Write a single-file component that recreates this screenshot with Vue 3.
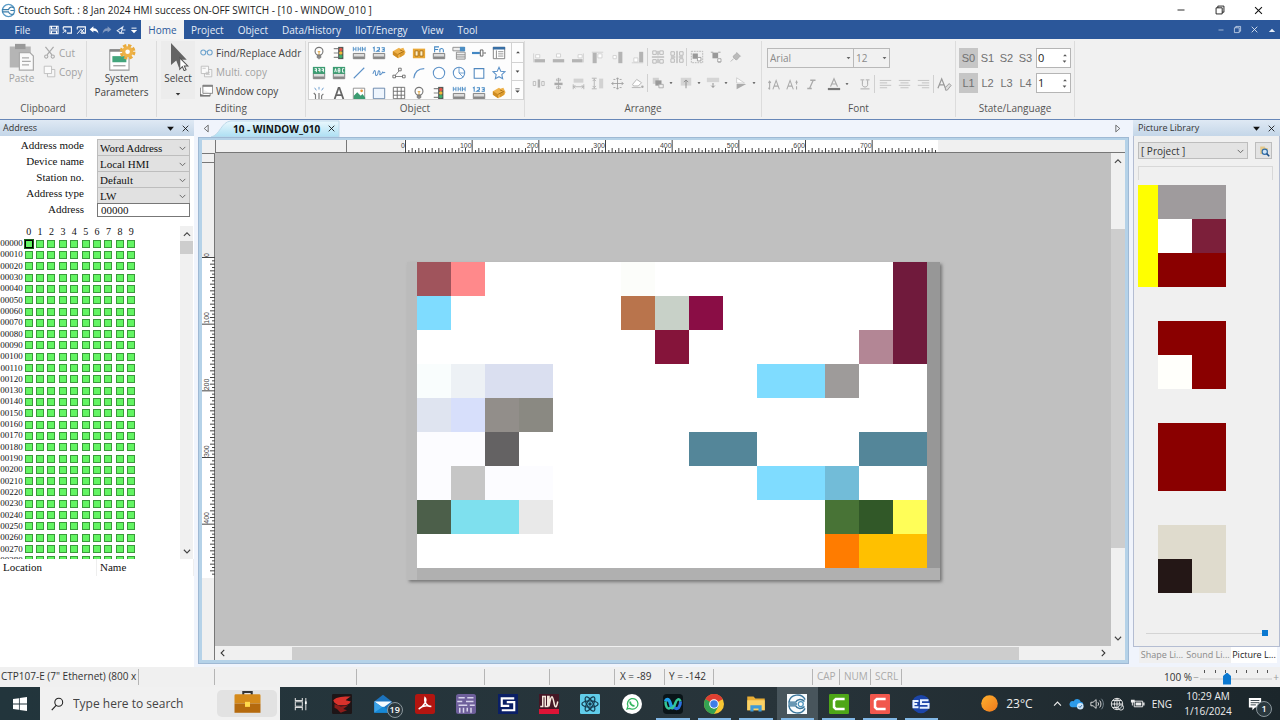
<script setup>
import { h } from 'vue'

const bulb = '<circle cx="8" cy="6" r="4.5" fill="#fff" stroke="#777" stroke-width="1.3"/><path d="M6.5 6.5h3M8 6.5v4" stroke="#d99a2b" fill="none"/><path d="M6 10.5h4v3H6zM7 14.5h2" fill="#888" stroke="#777"/>'
const lamp = '<path d="M2 3h5M2 8h5M2 13h5" stroke="#888" stroke-width="1.2"/><rect x="7" y="1" width="6" height="14" fill="#4f5b57"/><circle cx="10" cy="4" r="2" fill="#e2574c"/><circle cx="10" cy="8" r="2" fill="#f0b93a"/><circle cx="10" cy="12" r="2" fill="#3fae6b"/>'
const pad = '<path d="M1.500 8.500h13v6h-13z" fill="#ddd" stroke="#777"/><path d="M2 12h12v2.500H2z" fill="#888"/>'
const hand = '<path d="M1 6l7-4 1.500 1L13 2l2.500 5L14 10l-7 4-6-4z" fill="#efb24a"/><path d="M1 6l6 3.500V14l-6-4z" fill="#cf8c22"/><path d="M9 8.500l5-3V10l-5 3z" fill="#db9a2e"/><path d="M7 9.500L13.500 6M9 4.500l3 1" stroke="#a56d12" fill="none"/>'
const g = '#b4b4b4'
const doc = (c) => `<path d="M5.500 5.500h9v9h-9z" fill="#f6f6f6" stroke="${c}"/><path d="M1.500 1.500h9v9h-9z" fill="#fafafa" stroke="${c}"/>`
const lines = (a, b) => `<path d="M1 3h14M${a} 6h${b}M1 9h14M${a} 12h${b}" stroke="#b9b9b9" fill="none"/>`
const icons = {
  ctouch: '<circle cx="8" cy="8" r="6.500" fill="#fff" stroke="#5b9cc7" stroke-width="1.500"/><path d="M1 7h7c1-3 4-3 6-2M1 9.500h7c1 3 4 3 6 2M14 8h-4" fill="none" stroke="#3d7da8" stroke-width="1.300"/>',
  save: '<path d="M1.500 2h13v12h-13zM4 2v4.500h8V2M4 14V9.500h8V14" fill="none" stroke="#fff" stroke-width="1.700"/>',
  win: '<path d="M2 3h13v10H8M2 3v4" fill="none" stroke="#fff" stroke-width="1.700"/><path d="M1 13l5-5m0 4V8H2" fill="none" stroke="#fff" stroke-width="1.500"/>',
  winx: '<path d="M2 3h13v10H8M2 3v4" fill="none" stroke="#fff" stroke-width="1.700"/><path d="M2 14l6-7M7 13l6-7m-6 0l6 7" fill="none" stroke="#fff" stroke-width="1.500"/>',
  undo: '<path d="M1 7l6-5v3c5 0 8 3 8 9-2-4-4-5-8-5v3z" fill="#fff"/>',
  redo: '<path d="M15 7L9 2v3c-5 0-8 3-8 9 2-4 4-5 8-5v3z" fill="#8299bf"/>',
  pencil: '<path d="M2 9l9-6-3 10zM9 8h6M5 13h8" fill="none" stroke="#dce5f3" stroke-width="1.700"/>',
  more: '<path d="M4 5h8" stroke="#fff" stroke-width="1.500"/><path d="M3 8h10l-5 5z" fill="#fff"/>',
  min: '<path d="M4 8h8" stroke="currentColor"/>',
  restore: '<path d="M3.500 5.500h7v7h-7zM5.500 5.500v-2h7v7h-2" fill="none" stroke="currentColor"/>',
  close: '<path d="M3 3l10 10m0-10L3 13" stroke="currentColor" stroke-width="1.500"/>',
  up: '<path d="M3 11l5-5 5 5z" fill="currentColor"/>',
  down: '<path d="M2 5h12l-6 7z" fill="currentColor"/>',
  downbar: '<path d="M3 4h10" stroke="currentColor" stroke-width="1.500"/><path d="M3 8h10l-5 5z" fill="currentColor"/>',
  chevd: '<path d="M3 6l5 5 5-5" fill="none" stroke="currentColor" stroke-width="1.700"/>',
  chevu: '<path d="M3 11l5-5 5 5" fill="none" stroke="currentColor" stroke-width="1.700"/>',
  chevl: '<path d="M10 3L5 8l5 5" fill="none" stroke="currentColor" stroke-width="1.700"/>',
  chevr: '<path d="M6 3l5 5-5 5" fill="none" stroke="currentColor" stroke-width="1.700"/>',
  tril: '<path d="M11 2v12L4 8z" fill="none" stroke="#444" stroke-width="1.300"/>',
  trir: '<path d="M5 2v12l7-6z" fill="none" stroke="#444" stroke-width="1.300"/>',
  paste: '<path d="M1 2h12v12H1z" fill="#b5b5b5"/><path d="M4 .5h6v3H4z" fill="#999"/><path d="M6.500 5.500h6l2 2v8h-8z" fill="#fafafa" stroke="#aaa" stroke-width=".7"/><path d="M8 8.500h4M8 10.500h5M8 12.500h4" stroke="#aaa" stroke-width=".7"/>',
  cut: '<path d="M3 1l8 10M13 1L5 11" stroke="#aaa" stroke-width="1.500"/><circle cx="4" cy="13" r="2" fill="none" stroke="#aaa" stroke-width="1.300"/><circle cx="12" cy="13" r="2" fill="none" stroke="#aaa" stroke-width="1.300"/>',
  copy: doc('#b8b8b8'),
  multi: doc('#b8b8b8') + '<path d="M7 9h5M7 11.500h5M3 4h4" stroke="#bbb"/>',
  system: '<path d="M1 4h11v11.500H1z" fill="#fff" stroke="#999" stroke-width=".6"/><path d="M1 3.500h11v1.500H1z" fill="#888"/><path d="M2.500 7.500h8v3.500h-8z" fill="#43a57c"/><path d="M3 13h7" stroke="#999" stroke-width=".7"/><g transform="translate(11.200 5)"><circle r="3.600" fill="none" stroke="#e9ab3c" stroke-width="1.800" stroke-dasharray="1.800 1"/><circle r="3.200" fill="#eeb248"/><circle r="1.300" fill="#fff"/></g>',
  cursor: '<path d="M4 0v12.500l3-2.500 1.500 4 2-1-1.500-3.500h4z" fill="#646464"/><path d="M9 8.500v6.500l1.500-1.500 1 2.300 1.100-.5-1-2.200h2z" fill="#fff" stroke="#555" stroke-width=".6"/>',
  find: '<circle cx="4" cy="8" r="3" fill="none" stroke="#6ea3cd" stroke-width="1.300"/><circle cx="12" cy="8" r="3" fill="none" stroke="#6ea3cd" stroke-width="1.300"/><path d="M7 7h2" stroke="#6ea3cd"/>',
  wcopy: '<path d="M3.500 1.500h12v10h-12zM.5 4.500v10h12v-3" fill="#fff" stroke="#777"/><path d="M3.500 2.500h12M.5 13v1.500h12" stroke="#777" stroke-width="1.800"/>',
  bulb, lamp, hand,
  hhh: pad + '<path d="M1.500 1v5m0-2.500h3M4.500 1v5M7 1v5m0-2.500h3M10 1v5M12 1v5m0-2.500h3M15 1v5" stroke="#4388c4"/>',
  n123: pad + '<path d="M1 2.500l1.500-1v5M5.500 2h3v2L5.500 6h3.500M11 2h3v4h-3m1-2h2" fill="none" stroke="#4388c4" stroke-width="1.200"/>',
  switch: '<path d="M1 3h14v11H1z" fill="#e8a735"/><path d="M3.500 5.500h3.500v6H3.500zM9 5.500h3.500v6H9z" fill="#fff0c7" stroke="#a66a10"/>',
  fn: pad + '<path d="M3 7V1h5M3 4h4M9 7V3m0 1c2-2 4-1 4 1v2" fill="none" stroke="#4388c4" stroke-width="1.200"/>',
  combo: '<path d="M1 1.500h13v4H1zM5 7h10v8H5z" fill="#eee" stroke="#888"/><path d="M9 1h6v5H9z" fill="#4e8fc4"/><path d="M5 10h10M5 12.500h10" stroke="#888"/>',
  slide: '<path d="M0 8h9" stroke="#4388c4" stroke-width="2.500"/><path d="M9.500 4.500h3v7h-3zM13 8h3" fill="#fff" stroke="#555"/>',
  table: '<path d="M1.500 1.500h13v13h-13zM5 5v9" fill="#fff" stroke="#777"/><path d="M1 1h14v3H1z" fill="#386fa5"/><path d="M7 6.500h6M7 9h6M7 11.500h6" stroke="#888"/>',
  g999: pad + '<path d="M1 1h14v8H1z" fill="#3c9c72"/><path d="M3 3h2v2H3m2-2v4M7 3h2v2H7m2-2v4M11 3h2v2h-2m2-2v4" fill="none" stroke="#fff"/>',
  gabc: pad + '<path d="M1 1h14v8H1z" fill="#3c9c72"/><path d="M3 7l1-4 1 4M7 3v4h2V3zm0 2h2m5-2h-2v4h2" fill="none" stroke="#fff"/>',
  line: '<path d="M2 14L14 2" stroke="#5d92c8" stroke-width="1.300"/>',
  wave: '<path d="M1 9c2-6 3-4 3 0s3 1 3-2 3-1 2 2 3-1 3-2 1 2 3 0" fill="none" stroke="#5d92c8" stroke-width="1.200"/>',
  nodes: '<path d="M2.500 12L9 4.500m4 7.500H4" stroke="#777"/><path d="M1 10.500h3v3H1zM7.500 2.500h3v3h-3zM12 10.500h3v3h-3z" fill="#fff" stroke="#666"/>',
  arc: '<path d="M2 14C3 7 7 3 14 3" fill="none" stroke="#5d92c8" stroke-width="1.300"/>',
  circle: '<circle cx="8" cy="8" r="6.500" fill="#fff" stroke="#5d92c8" stroke-width="1.200"/>',
  pie: '<circle cx="8" cy="8" r="6.500" fill="#fff" stroke="#5d92c8" stroke-width="1.200"/><path d="M8 1.500V8h6.500M8 8l4.500 4.500" fill="none" stroke="#5d92c8"/>',
  rect: '<path d="M2.500 3h11v11h-11z" fill="#fff" stroke="#4f87be" stroke-width="1.200"/>',
  star: '<path d="M8 1.500l2 4.500 4.800.5-3.600 3.300 1 4.800L8 12.200l-4.200 2.400 1-4.800L1.200 6.500 6 6z" fill="#fff" stroke="#5d92c8" stroke-width="1.200"/>',
  burst: '<path d="M8 1v3M3 2l2 3m8-3l-2 3" stroke="#5d92c8"/><path d="M2 8l2 2v5M8 8v7m5-6l-2 2v4" fill="none" stroke="#777" stroke-width="1.300"/>',
  bigA: '<path d="M3 15L7.500 2h1L13 15M4.500 10.500h7" fill="none" stroke="#666" stroke-width="2"/>',
  image: '<path d="M1.500 2.500h13v13h-13z" fill="#fff" stroke="#888"/><path d="M2 15v-4l4-4 4 4 2-2 3 4v2z" fill="#3c9c72"/><circle cx="11" cy="5.500" r="1.500" fill="#e9943a"/>',
  frame: '<path d="M1.500 2.500h13v12h-13z" fill="#eef5fd" stroke="#5f7fa6"/>',
  grid: '<path d="M1.500 1.500h13v13h-13zM1.500 6h13m-13 4.500h13M6 1.500v13m4.500-13v13" fill="#fff" stroke="#666"/>',
  al1: `<path d="M3 10h13v4H3z" fill="${g}"/><path d="M4.500 4.500h5v4h-5z" fill="#fff" stroke="#ccc"/><path d="M2 3v11" stroke="#ccc"/>`,
  al2: `<path d="M1 10h14v4H1z" fill="${g}"/><path d="M5.500 3.500h5v4h-5z" fill="#fff" stroke="#ccc"/>`,
  al3: `<path d="M0 10h13v4H0z" fill="${g}"/><path d="M7.500 4.500h5v4h-5z" fill="#fff" stroke="#ccc"/><path d="M14 3v11" stroke="#ccc"/>`,
  al4: `<path d="M2 2h5v13H2z" fill="${g}"/><path d="M8.500 3.500h5v5h-5z" fill="#fff" stroke="#ccc"/><path d="M1 1.500h14" stroke="#ccc"/>`,
  al5: `<path d="M9 1h5v14H9z" fill="${g}"/><path d="M2.500 5.500h4v4h-4z" fill="#fff" stroke="#ccc"/>`,
  al6: `<path d="M10 1h5v13h-5z" fill="${g}"/><path d="M3.500 8.500h5v5h-5z" fill="#fff" stroke="#ccc"/><path d="M1 14.500h14" stroke="#ccc"/>`,
  ar1: `<path d="M2 1h4v4H2zM10 1h4v4h-4zM2 11h4v4H2zM10 11h4v4h-4z" fill="none" stroke="${g}"/><path d="M1 8h14M8 1v5m0 4v5" stroke="#999"/>`,
  ar2: `<path d="M1 2h4v4H1zM11 2h4v4h-4zM1 10h4v4H1zM11 10h4v4h-4z" fill="none" stroke="${g}"/><path d="M8 1v14M1 8h5m4 0h5" stroke="#999"/>`,
  gr1: `<path d="M1.500 1.500h13v13h-13z" fill="none" stroke="${g}" stroke-dasharray="2 1"/><path d="M3 4h6v6H3z" fill="#999"/><path d="M8.500 8.500h4v4h-4z" fill="#fff" stroke="#999"/>`,
  gr2: '<path d="M3 2h7v7H3z" fill="#999"/><path d="M9.500 9.500h4v4h-4zM1 1.500h3m6 0h3m-3 12h3" fill="#fff" stroke="#999"/>',
  pin: '<path d="M9 2l5 5-2 1-2 3-2 1-4-4 1-2 3-2zM5 10l-4 4" fill="#bbb" stroke="#aaa"/>',
  d1: `<path d="M1.500 5.500h3v5h-3zM12 5.500h3v5h-3z" fill="none" stroke="${g}"/><path d="M7 3h3v10H7z" fill="${g}"/>`,
  d2: `<path d="M5.500 2.500h5v2h-5zM5.500 12h5v2h-5z" fill="none" stroke="${g}"/><path d="M3 7h10v3H3z" fill="#aaa"/><path d="M8 1v14" stroke="#aaa"/>`,
  d3: '<path d="M2 2h12v5H2z" fill="#d2d2d2"/><path d="M2 12h12M1.500 9v6m13-6v6M4 10l-2 2 2 2m8-4l2 2-2 2" fill="none" stroke="#aaa"/>',
  d4: '<path d="M10 2h5v12h-5z" fill="#d2d2d2"/><path d="M4 2v12M1 1.500h6m-6 13h6M2 5l2-2 2 2m-4 6l2 2 2-2" fill="none" stroke="#aaa"/>',
  d5: '<path d="M8 1v14M1 8h14M6 3l2-2 2 2m-4 10l2 2 2-2M3 6L1 8l2 2m10-4l2 2-2 2M3 3h2m6 0h2M3 13h2m6 0h2" fill="none" stroke="#999"/>',
  d6: '<path d="M2 9l5-6 6 4-4 4H3zM1 13h11" fill="#fff" stroke="#aaa"/><circle cx="14" cy="12" r="1.500" fill="#aaa"/>',
  o1: '<path d="M2 2h7v7H2z" fill="#d0d0d0"/><path d="M5 5h7v6H5z" fill="#999"/><path d="M9 9.500h5v4H9z" fill="#eee" stroke="#aaa"/>',
  o2: '<path d="M2 2h12v9H2z" fill="#d5d5d5"/><path d="M8 14V5M5.500 7L8 4.500 10.500 7" fill="none" stroke="#888"/>',
  o3: '<path d="M1 2h14v5H1z" fill="#d5d5d5"/><path d="M8 8v5m-2-2l2 2 2-2" fill="none" stroke="#888"/>',
  o4: '<path d="M3 8V2l9 6z" fill="#fff" stroke="#ccc"/><path d="M3 9h11l-11 6z" fill="#aaa"/>',
  fup: '<path d="M2 4v10M.5 6L2 4l1.500 2m-3 6L2 14M6 14l4-11 4 11M7.500 10h5" fill="none" stroke="#aaa" stroke-width="1.300"/>',
  fdn: '<path d="M1 14L5 3l4 11M2.500 10h5M13 4v4m0 2v4M12 6l1-2 1 2" fill="none" stroke="#aaa" stroke-width="1.300"/>',
  ital: '<path d="M7 3h7M3 14h6M11 3L6 14" fill="none" stroke="#aaa" stroke-width="1.700"/>',
  fcol: '<path d="M4 11l4-9 4 9M5.500 8h5" fill="none" stroke="#aaa" stroke-width="1.400"/><path d="M1 12.500h14V15H1z" fill="#777"/>',
  under: '<path d="M2 2.500h5m2 0h5M4.500 3v6c0 4 7 4 7 0V3M2 14.500h12" fill="none" stroke="#aaa" stroke-width="1.300"/>',
  left: lines(1, 9), center: lines(3, 10), right: lines(6, 9),
  brush: '<path d="M1 12L5 2l4 10M2.500 8.500h5" fill="none" stroke="#999" stroke-width="1.300"/><path d="M9 11l4-4 2 2-4 5H9z" fill="#ddd" stroke="#999"/>',
  search: '<circle cx="10" cy="6" r="4.500" fill="none" stroke="#222" stroke-width="1.200"/><path d="M7 9.500L2 15" stroke="#222" stroke-width="1.300"/>',
  lookup: '<path d="M3 2h6l1 2h3v8H3z" fill="#e5c98b"/><circle cx="9" cy="9" r="3.500" fill="#cfe4f7" stroke="#2f6ca8" stroke-width="1.500"/><path d="M11.500 11.500L15 15" stroke="#1c4f86" stroke-width="2"/>',
  start: '<path d="M0 2.300l6.800-1v6.200H0zM7.700 1.200L16 0v7.500H7.700zM0 8.500h6.800v6.200L0 13.700zM7.700 8.500H16V16l-8.300-1.200z" fill="#fff"/>',
  brief: '<path d="M5.500 3V1.200h5V3" fill="none" stroke="#333" stroke-width="1.200"/><path d="M1 2.500h14a.7.7 0 01.7.700V8H.3V3.200A.7.700 0 011 2.500z" fill="#d58a1a"/><path d="M.3 8h15.400v5.500H.3z" fill="#b56a0e"/><path d="M6.500 7h3v3h-3z" fill="#ffd94a"/>',
  task: '<path d="M1.500 1v3h8V1M1.500 15v-3h8v3M1.500 5.500h8v5h-8zM13.500 1v14" fill="none" stroke="#ddd" stroke-width="1.200"/><path d="M12.500 5h2v3h-2z" fill="#fff"/>',
  dragon: '<rect width="16" height="16" rx="1" fill="#1d1517"/><path d="M1 5c3-3 8-3 14-3-2 1-3 2-4 3l4 1c-1 2-3 3-5 3H5L2 7z" fill="#d8322c"/><path d="M2 8l5 2 6-1-4 3 3 1-5 2-3-3-2-1z" fill="#8c1c1a"/>',
  mail: '<path d="M1 6l7-5.500L15 6v9H1z" fill="#1c73bd"/><path d="M1 6h14l-7 5z" fill="#f4faff"/><path d="M1 6l7 5-7 4z" fill="#3ba3e8"/><path d="M1 15h14l-7-5z" fill="#1689d6"/>',
  pdf: '<rect width="16" height="16" rx="2" fill="#b31510"/><path d="M8 3c2 2-1 7-5 9 3-3 7-3 10-2-3 0-6-3-5-7z" fill="none" stroke="#fff" stroke-width="1.200"/>',
  code: '<rect width="16" height="16" rx="2" fill="#6e5f9b"/><path d="M2 3h5m2 0h5M1 6h4m3 0h6M2 9h7m2 0h4M3 11v4m3-4v4m3-4v3m3-3v4" stroke="#d8d4ec" stroke-width="1.200"/>',
  sblue: '<rect width="16" height="16" fill="#0a1f66"/><path d="M13 3.500H3v6h6M7 6.500h6v6.500H3" fill="none" stroke="#fff" stroke-width="1.700"/>',
  scope: '<rect width="16" height="16" fill="#451725"/><path d="M0 12h16v4H0z" fill="#dd1436"/><path d="M1 10h2V2h2v8h2V2h1v8c2-12 3-8 4-3s2 4 3-1" fill="none" stroke="#f5e9dc" stroke-width="1.200"/>',
  react: '<rect width="16" height="16" rx="1" fill="#61cdea"/><g fill="none" stroke="#163d50"><ellipse cx="8" cy="8" rx="6.500" ry="2.500"/><ellipse cx="8" cy="8" rx="6.500" ry="2.500" transform="rotate(60 8 8)"/><ellipse cx="8" cy="8" rx="6.500" ry="2.500" transform="rotate(120 8 8)"/></g><circle cx="8" cy="8" r="1.400" fill="#163d50"/>',
  phone: '<circle cx="8" cy="8" r="8" fill="#fff"/><path d="M4 12l.8-2.300A4.200 4.200 0 118 12c-.8 0-1.400-.2-2-.5z" fill="none" stroke="#32b55f"/><path d="M6.500 6c0 2 1.500 3.500 3.500 3.500" fill="none" stroke="#32b55f" stroke-width="1.500"/>',
  webex: '<rect width="16" height="16" rx="3" fill="#0a1418"/><path d="M2 6c1-3 3-2 4 2s2 4 3 1" fill="none" stroke="#1f9de8" stroke-width="2.600"/><path d="M6 11c-3 2-4-2-4-5M14 6c-1-3-3-2-4 1s-2 5-4 4" fill="none" stroke="#35c796" stroke-width="2"/><path d="M14 6c0 4-2 7-5 5" fill="none" stroke="#2a6fe0" stroke-width="2.400"/>',
  chrome: '<circle cx="8" cy="8" r="8" fill="#f7c633"/><path d="M8 8L1.100 4A8 8 0 0115 4z" fill="#de3f32"/><path d="M1.100 4A8 8 0 008 16l3.500-6L8 8z" fill="#34a252"/><path d="M1.100 4H15l-4 2-3 2z" fill="#de3f32"/><circle cx="8" cy="8" r="3.800" fill="#fff"/><circle cx="8" cy="8" r="3" fill="#3f7de8"/>',
  folder: '<path d="M1 2h5l1.500 1.500H15V13H1z" fill="#e9ad34"/><path d="M1 5h14v8H1z" fill="#fbd267"/><path d="M3.500 14v-5h9v5h-2.500v-2.500H6V14z" fill="#3f9ad6"/>',
  ct2: '<rect width="16" height="16" fill="#f8fbfd"/><path d="M14.500 4.500A7 7 0 001.500 6.500H7c1-2.500 5-3 7-.5M14.500 11.500A7 7 0 011.500 9.500H7c1 2.500 5 3 7 .5M1 8h7" fill="none" stroke="#39759b" stroke-width="1.100"/><circle cx="11" cy="8" r="2" fill="#fff" stroke="#4a92bb"/>',
  camg: '<rect width="16" height="16" rx="1" fill="#4ea617"/><path d="M12.500 4H5.500L4 5.500v5L5.500 12h7" fill="none" stroke="#fff" stroke-width="2"/>',
  camr: '<rect width="16" height="16" rx="1" fill="#f1574c"/><path d="M12.500 4H5.500L4 5.500v5L5.500 12h7" fill="none" stroke="#fff" stroke-width="2"/>',
  ess: '<circle cx="8" cy="8" r="7.300" fill="#1c45a8"/><path d="M6 5.500H2v5h4M2 8h3M14 5H8v3h6v3H7" fill="none" stroke="#e8f2ff" stroke-width="1.600"/>',
  sun: '<defs><linearGradient id="sunfill" x2="1" y2="1"><stop stop-color="#ffb12e"/><stop offset="1" stop-color="#f0791c"/></linearGradient></defs><circle cx="8" cy="8" r="7.800" fill="url(#sunfill)"/>',
  cloud: '<path d="M3 12h9a3 3 0 00.500-6A4 4 0 005 5.500 3.300 3.300 0 003 12z" fill="#2d9be9"/><circle cx="12" cy="11" r="3.500" fill="#cfe6f8"/><path d="M10.500 11l1.200 1.200 2-2.400" fill="none" stroke="#1d5e98"/>',
  sound: '<path d="M1 6h2.500L7 3v10L3.500 10H1zM9 6c1 1 1 3 0 4m2-6c2 2 2 6 0 8" fill="none" stroke="#ddd" stroke-width="1.100"/><path d="M13 2c3 3 3 9 0 12" fill="none" stroke="#84919a"/>',
  globe: '<circle cx="8" cy="8" r="6.500" fill="none" stroke="#eee"/><path d="M1.500 8h13M8 1.500v13M3 4h10M3 12h6M8 1.500c-4 4-4 9 0 13M8 1.500c3 3 3 5 3 7" fill="none" stroke="#eee"/><circle cx="12.500" cy="12" r="3" fill="#202e34" stroke="#eee"/><path d="M10.500 14l4-4" stroke="#eee"/>',
  batt: '<path d="M4.500 5.500h9v6h-9z" fill="none" stroke="#eee"/><path d="M6 7h6v3H6zM14 7h1.500v3H14zM1 4h4v3H3v3H2V7H1z" fill="#eee"/>',
  note: '<path d="M1 1h14v11H8l-3 3v-3H1z" fill="#fff"/><path d="M3 4h10M3 6.500h10M3 9h6" stroke="#26343b"/>',
}
const Ico = (p) => h('svg', { viewBox: '0 0 16 16', width: p.s, height: p.s, 'aria-hidden': 'true', innerHTML: icons[p.n] })
Ico.props = ['n', 's']

const menus = ['Project', 'Object', 'Data/History', 'IIoT/Energy', 'View', 'Tool']
const quick = ['save', 'win', 'winx', 'undo', 'redo', 'pencil', 'more']
const gallery = ['bulb', 'lamp', 'hhh', 'n123', 'hand', 'switch', 'fn', 'combo', 'slide', 'table',
  'g999', 'gabc', 'line', 'wave', 'nodes', 'arc', 'circle', 'pie', 'rect', 'star',
  'burst', 'bigA', 'image', 'frame', 'grid', 'bulb', 'lamp', 'hhh', 'n123', 'hand']
const states = [['S0', 'S1', 'S2', 'S3'], ['L1', 'L2', 'L3', 'L4']]
const fields = [['Address mode', 'Word Address'], ['Device name', 'Local HMI'], ['Station no.', 'Default'], ['Address type', 'LW']]
const rows = Array.from({ length: 29 }, (_, i) => String(i * 10).padStart(5, '0'))

const palette = {
  a: '#a0545c', b: '#ff898b', c: '#7fdcff', d: '#fcfdfa', e: '#701a3c', f: '#b9744c', g: '#c8d1c8', h: '#8a0d45',
  i: '#85143a', j: '#b38695', k: '#f9fdfd', l: '#edf1f5', m: '#dadff0', n: '#9e9b9a', o: '#dfe4f0', p: '#d7dffb',
  q: '#928e8a', r: '#8a8982', s: '#fcfcff', t: '#646263', u: '#548699', v: '#c6c6c6', w: '#72bcd8', x: '#4c5f4a',
  y: '#7ee0ee', z: '#e9e9e9', A: '#487336', B: '#315828', C: '#fffe58', D: '#ff7c00', E: '#ffc000',
  F: '#9f9b9d', G: '#ffffff', H: '#7c1f3a', I: '#8a0000', J: '#fffffb', K: '#dfdbcd', L: '#241716', '.': '#ffffff',
}
const mosaic = [
  'ab....d.......e', 'c.....fgh.....e', '.......i.....je', 'klmm......ccn..', 'opqr...........',
  'sst.....uu...uu', 'svss......ccw..', 'xyyz........ABC', '............DEE',
].join('').split('')
const pictures = [['FF', 'GH', 'II'], ['II', 'JI'], ['II', 'II'], ['KK', 'LK']]

const ticks = (n) => Array.from({ length: n }, (_, i) => ({ p: (i * 10) / 3, big: i % 20 === 0, mid: i % 2 === 0, v: i * 5 }))
const hTicks = ticks(160)
const vTicks = ticks(96)

const apps = ['task', 'dragon', 'mail', 'pdf', 'code', 'sblue', 'scope', 'react', 'phone', 'webex', 'chrome', 'folder', 'ct2', 'camg', 'camr', 'ess']
const running = ['webex', 'chrome', 'folder', 'ct2', 'camg', 'camr', 'ess']
</script>

<template>
  <div class="app">
    <header class="title">
      <Ico n="ctouch" s="15" />
      <h1>Ctouch Soft. : 8 Jan 2024 HMI success ON-OFF SWITCH - [10 - WINDOW_010 ]</h1>
      <div class="wbtns">
        <button aria-label="Minimize"><Ico n="min" s="14" /></button>
        <button aria-label="Restore"><Ico n="restore" s="14" /></button>
        <button aria-label="Close"><Ico n="close" s="11" /></button>
      </div>
    </header>

    <nav class="menu">
      <button class="file">File</button>
      <div class="quick"><button v-for="q in quick" :key="q" :aria-label="q"><Ico :n="q" s="10" /></button></div>
      <button class="active">Home</button>
      <button v-for="m in menus" :key="m">{{ m }}</button>
      <div class="mdi">
        <button aria-label="Minimize window"><Ico n="min" s="10" /></button>
        <button aria-label="Restore window"><Ico n="restore" s="11" /></button>
        <button aria-label="Close window"><Ico n="close" s="9" /></button>
        <button aria-label="Collapse ribbon"><Ico n="up" s="10" /></button>
      </div>
    </nav>

    <div class="ribbon">
      <section class="grp clip">
        <div class="body">
          <button class="big dim"><Ico n="paste" s="28" /><span>Paste</span></button>
          <div class="stack dim">
            <button><Ico n="cut" s="13" />Cut</button>
            <button><Ico n="copy" s="13" />Copy</button>
          </div>
        </div>
        <h2>Clipboard</h2>
      </section>
      <section class="grp sys">
        <button class="big"><Ico n="system" s="28" /><span>System<br>Parameters</span></button>
      </section>
      <section class="grp edit">
        <div class="body">
          <button class="big select"><Ico n="cursor" s="28" /><span>Select</span><Ico n="down" s="6" /></button>
          <div class="stack">
            <button><Ico n="find" s="13" />Find/Replace Addr</button>
            <button class="dim"><Ico n="multi" s="13" />Multi. copy</button>
            <button><Ico n="wcopy" s="13" />Window copy</button>
          </div>
        </div>
        <h2>Editing</h2>
      </section>
      <section class="grp obj">
        <div class="gallery">
          <div class="tiles"><button v-for="(o, i) in gallery" :key="i" :aria-label="o"><Ico :n="o" s="14" /></button></div>
          <div class="gscroll">
            <button aria-label="Previous row"><Ico n="up" s="6" /></button>
            <button aria-label="Next row"><Ico n="down" s="5" /></button>
            <button aria-label="Expand gallery"><Ico n="downbar" s="7" /></button>
          </div>
        </div>
        <h2>Object</h2>
      </section>
      <section class="grp arr">
        <div class="tools">
          <div class="set six"><button v-for="i in 6" :key="i" :aria-label="'Align ' + i"><Ico :n="'al' + i" s="13" /></button></div>
          <div class="set two"><button aria-label="Space down"><Ico n="ar1" s="14" /></button><button aria-label="Space across"><Ico n="ar2" s="14" /></button></div>
          <div class="set three"><button aria-label="Group"><Ico n="gr1" s="14" /></button><button aria-label="Ungroup"><Ico n="gr2" s="13" /></button><button aria-label="Pin"><Ico n="pin" s="12" /></button></div>
        </div>
        <div class="tools">
          <div class="set six"><button v-for="i in 6" :key="i" :aria-label="'Distribute ' + i"><Ico :n="'d' + i" s="13" /></button></div>
          <div class="set four"><button v-for="i in 4" :key="i" :aria-label="'Order ' + i"><Ico :n="'o' + i" s="14" /><Ico n="down" s="4" /></button></div>
        </div>
        <h2>Arrange</h2>
      </section>
      <section class="grp font">
        <div class="pair">
          <label class="pick face"><select aria-label="Font"><option>Arial</option></select><Ico n="down" s="5" /></label>
          <label class="pick size"><select aria-label="Font size"><option>12</option></select><Ico n="down" s="5" /></label>
        </div>
        <div class="tools">
          <div class="set five">
            <button aria-label="Larger"><Ico n="fup" s="13" /></button><button aria-label="Smaller"><Ico n="fdn" s="13" /></button>
            <button aria-label="Italic"><Ico n="ital" s="12" /></button>
            <button class="wide" aria-label="Color"><Ico n="fcol" s="14" /><Ico n="down" s="4" /></button>
            <button aria-label="Underline"><Ico n="under" s="12" /></button>
          </div>
          <div class="set aligns"><button v-for="a in ['left', 'center', 'right']" :key="a" :aria-label="a"><Ico :n="a" s="13" /></button></div>
          <div class="set one"><button aria-label="Format painter"><Ico n="brush" s="15" /></button></div>
        </div>
        <h2>Font</h2>
      </section>
      <section class="grp lang">
        <div v-for="(s, i) in states" :key="i" class="states">
          <button v-for="(b, j) in s" :key="b" :class="{ on: j === 0 }">{{ b }}</button>
          <div class="spin"><input :value="i" :aria-label="i ? 'Language' : 'State'"><span><Ico n="up" s="6" /><Ico n="down" s="5" /></span></div>
        </div>
        <h2>State/Language</h2>
      </section>
    </div>

    <main class="work">
      <aside class="address">
        <div class="phead"><h3>Address</h3><button aria-label="Panel menu"><Ico n="down" s="9" /></button><button aria-label="Close panel"><Ico n="close" s="9" /></button></div>
        <form class="form" @submit.prevent>
          <div v-for="(f, i) in fields" :key="f[0]" class="frow">
            <label :for="'f' + i">{{ f[0] }}</label>
            <div class="pick"><select :id="'f' + i"><option>{{ f[1] }}</option></select><Ico n="chevd" s="9" /></div>
          </div>
          <div class="frow"><label for="addr">Address</label><input id="addr" value="00000"></div>
        </form>
        <div class="mem">
          <table>
            <thead><tr><th></th><th v-for="n in 10" :key="n">{{ n - 1 }}</th></tr></thead>
            <tbody>
              <tr v-for="(r, i) in rows" :key="r"><th>{{ r }}</th><td v-for="n in 10" :key="n" :class="{ cur: i === 0 && n === 1 }"><i></i></td></tr>
            </tbody>
          </table>
          <div class="vbar"><Ico n="chevu" s="10" /><b></b><Ico n="chevd" s="10" /></div>
        </div>
        <div class="locs"><span>Location</span><span>Name</span></div>
      </aside>

      <section class="editor">
        <div class="tabs">
          <Ico n="tril" s="9" />
          <div class="tab"><svg class="tabbg" viewBox="0 0 130 18" preserveAspectRatio="none"><defs><linearGradient id="tabfill" x2="0" y2="1"><stop stop-color="#ebf8fd" /><stop offset="1" stop-color="#acdff3" /></linearGradient></defs><path d="M0 18C9 16 10 2 20 1H128V18Z" fill="url(#tabfill)" stroke="#bdd8e8" /></svg><button class="tname">10 - WINDOW_010</button><button aria-label="Close tab"><Ico n="close" s="9" /></button></div>
          <Ico class="last" n="trir" s="9" />
        </div>
        <div class="frame">
          <div class="corner"></div>
          <svg class="hr" height="13">
            <rect x="189" width="534" height="13" fill="#fff" />
            <path d="M.5 0V13M131.500 0V13M0 12.500H4000" stroke="#777" />
            <g transform="translate(190 0)">
              <template v-for="t in hTicks" :key="t.v">
                <path :d="`M${t.p + 0.5} ${t.big ? 0 : t.mid ? 8 : 10}V13`" stroke="#444" />
                <text v-if="t.big" :x="t.p" y="8" text-anchor="end">{{ t.v }}</text>
              </template>
            </g>
          </svg>
          <svg class="vr" width="13">
            <rect y="105" width="13" height="320" fill="#fff" />
            <path d="M0 .5H13M0 9.500H13M12.500 0V4000" stroke="#777" />
            <g transform="translate(0 104)">
              <template v-for="t in vTicks" :key="t.v">
                <path :d="`M${t.big ? 0 : t.mid ? 8 : 10} ${t.p + 0.5}H13`" stroke="#444" />
                <text v-if="t.big" :transform="`translate(7 ${t.p}) rotate(-90)`">{{ t.v }}</text>
              </template>
            </g>
          </svg>
          <div class="canvas">
            <div class="screen">
              <div class="mosaic"><i v-for="(c, i) in mosaic" :key="i" :style="{ background: palette[c] }"></i></div>
              <div class="edge"></div>
            </div>
          </div>
          <div class="vbar main"><Ico n="chevu" s="10" /><b></b><Ico n="chevd" s="10" /></div>
          <div class="hbar"><Ico n="chevl" s="10" /><b></b><Ico n="chevr" s="10" /></div>
        </div>
      </section>

      <aside class="library">
        <div class="phead"><h3>Picture Library</h3><button aria-label="Panel menu"><Ico n="down" s="9" /></button><button aria-label="Close panel"><Ico n="close" s="9" /></button></div>
        <div class="lbody">
          <div class="lpick">
            <div class="pick"><select aria-label="Library"><option>[ Project ]</option></select><Ico n="chevd" s="9" /></div>
            <button aria-label="Manage library"><Ico n="lookup" s="12" /></button>
          </div>
          <div class="lbox"></div>
          <div class="pics">
            <div v-for="(p, i) in pictures" :key="i" class="pic" :class="{ chosen: i === 0 }">
              <div><i v-for="(c, j) in p.join('').split('')" :key="j" :style="{ background: palette[c] }"></i></div>
            </div>
          </div>
          <input class="lzoom" type="range" value="100" aria-label="Thumbnail size">
        </div>
        <div class="ltabs"><button>Shape Li...</button><button>Sound Li...</button><button class="on">Picture L...</button></div>
      </aside>
    </main>

    <footer class="status">
      <span class="s1">CTP107-E (7" Ethernet) (800 x 4</span><span class="s2"></span><span class="s3"></span><span class="s4"></span><span class="s5"></span><span class="s5"></span>
      <span class="s6">X = -89</span><span class="s7">Y = -142</span><span class="s8"></span>
      <span class="k k1">CAP</span><span class="k k2">NUM</span><span class="k k3">SCRL</span>
      <div class="zoom"><label for="zoom">100 %</label><em>−</em>
        <div class="ztrack"><div class="zt"><i v-for="n in 7" :key="n"></i></div><input id="zoom" type="range" min="0" max="100" value="36"></div><em>+</em></div>
    </footer>

    <div class="taskbar">
      <button class="start" aria-label="Start"><Ico n="start" s="14" /></button>
      <div class="find"><Ico n="search" s="14" /><input placeholder="Type here to search" aria-label="Type here to search"><span class="case"><Ico n="brief" s="27" /></span></div>
      <div class="apps">
        <button v-for="a in apps" :key="a" :class="{ run: running.includes(a), cur: a === 'ct2' }" :aria-label="a"><Ico :n="a" :s="a === 'task' ? 14 : 20" /><b v-if="a === 'mail'">19</b></button>
      </div>
      <div class="tray">
        <Ico n="sun" s="17" /><span class="temp">23°C</span>
        <Ico n="chevu" s="11" /><Ico n="cloud" s="15" /><Ico n="sound" s="14" /><Ico n="globe" s="14" /><Ico n="batt" s="15" />
        <span class="eng">ENG</span>
        <div class="clock"><span>10:29 AM</span><span>1/16/2024</span></div>
        <button class="note" aria-label="Notifications"><Ico n="note" s="14" /><b>1</b></button>
      </div>
    </div>
  </div>
</template>

<style>
html, body { margin: 0; overflow: hidden; }
</style>

<style scoped>
* { box-sizing: border-box; }
.app { display: flex; flex-direction: column; height: 100vh; background: #f0f0f0; color: #333; font: 10px/14px "Open Sans", "Noto Sans", sans-serif; overflow: hidden; }
button { border: 0; padding: 0; margin: 0; background: none; font: inherit; color: inherit; display: flex; align-items: center; justify-content: center; }
h1, h2, h3 { margin: 0; font-weight: 400; }
svg { flex: none; display: block; }
input, select { font: inherit; color: inherit; margin: 0; border-radius: 0; outline: 0; min-width: 0; }
select { appearance: none; width: 100%; height: 100%; border: 0; background: none; padding: 0 2px; }
.pick { display: flex; position: relative; }
.pick > svg { position: absolute; right: 2px; top: 50%; transform: translateY(-50%); pointer-events: none; color: #666; }

.title { flex: none; height: 20px; background: #fff; display: flex; align-items: center; gap: 2px; padding-left: 1px; color: #222; }
.title h1 { font-size: 10px; white-space: nowrap; }
.wbtns { margin-left: auto; display: flex; color: #111; margin-right: 2px; }
.wbtns button { width: 39px; height: 19px; }

.menu { flex: none; height: 19px; background: #2b579a; color: #e6edf7; display: flex; }
.menu > button { padding: 0 7px; white-space: nowrap; }
.menu > .file { width: 45px; }
.quick { display: flex; width: 96px; padding-left: 2px; }
.quick button { flex: 1; }
.menu > .active { background: #f3f3f3; color: #2b579a; width: 43px; padding: 0; }
.mdi { margin-left: auto; display: flex; }
.mdi button { width: 17px; }

.ribbon { flex: none; height: 81px; display: flex; background: #f1f1f1; border-bottom: 1px solid #6787b8; color: #444; }
.grp { position: relative; display: flex; flex-direction: column; border-right: 1px solid #dcdcdc; margin: 2px 0; flex: none; }
.grp h2 { margin-top: auto; font-size: 10px; line-height: 15px; text-align: center; color: #555; padding-bottom: 1px; }
.body { display: flex; }
.dim { color: #a2a2a2; }
.big { flex-direction: column; justify-content: flex-start; padding-top: 2px; line-height: 14px; }
.big span { text-align: center; }
.stack button { height: 19px; justify-content: flex-start; gap: 3px; white-space: nowrap; }
.clip { width: 87px; }
.clip .big { width: 43px; }
.clip .stack { padding-top: 2px; }
.sys { width: 70px; }
.edit { width: 149px; }
.edit .select { width: 34px; margin-left: 4px; background: #ececec; height: 58px; }
.edit .select svg:last-child { margin-top: 6px; color: #333; }
.edit .stack { padding: 2px 0 0 5px; }
.obj { width: 219px; }
.gallery { margin: 1px 0 0 2px; width: 216px; height: 58px; display: flex; background: #fdfdfd; border: 1px solid #d2d2d2; overflow: hidden; }
.tiles { display: grid; grid-template-columns: repeat(10, 20px); grid-auto-rows: 20px; width: 202px; }
.gscroll { width: 12px; flex: none; display: grid; grid-template-rows: 1fr 1fr 1fr; border-left: 1px solid #d2d2d2; }
.gscroll button + button { border-top: 1px solid #d2d2d2; }
.arr { width: 237px; }
.tools { display: flex; height: 26px; align-items: center; padding-left: 3px; }
.arr .tools { padding: 6px 0 0 4px; }
.set { display: flex; height: 18px; }
.set button { flex: 1; gap: 4px; }
.set + .set { border-left: 1px solid #d0d0d0; }
.six { width: 118px; }
.two { width: 39px; }
.three { width: 60px; }
.four { width: 112px; }
.font { width: 194px; }
.pair { display: flex; padding: 7px 0 0 5px; }
.pair .pick { height: 20px; border: 1px solid #b9b9b9; color: #8a8a8a; }
.pair .size { border-left: 0; width: 36px; }
.pair .face { width: 87px; }
.font .tools { height: 32px; }
.five { width: 110px; }
.five .wide { flex: 2; }
.aligns { width: 59px; }
.one { width: 22px; }
.lang { width: 119px; }
.states { display: flex; height: 20px; margin: 7px 0 0 3px; color: #707070; font-family: "Liberation Sans", Arial, sans-serif; font-size: 11px; }
.states + .states { margin-top: 5px; }
.states > button { width: 19px; }
.states .on { background: #c6c6c6; }
.spin { display: flex; width: 35px; border: 1px solid #b5b5b5; background: #fff; margin-left: 1px; color: #222; font-family: "Open Sans", sans-serif; }
.spin input { width: 22px; border: 0; padding: 0 1px; background: none; }
.spin span { display: flex; flex-direction: column; justify-content: space-around; margin-left: auto; padding: 2px; color: #555; }

.work { flex: 1; min-height: 0; display: flex; background: #f0f4fc; }
.phead { flex: none; height: 16px; background: linear-gradient(#dfe9f4, #c4d6e8); display: flex; align-items: center; gap: 6px; padding: 0 4px 0 3px; color: #333; }
.phead h3 { margin-right: auto; font-size: 9px; }
.phead button { color: #111; }
.address { width: 194px; flex: none; background: #fff; display: flex; flex-direction: column; color: #111; font-family: "Liberation Serif", "Times New Roman", serif; font-size: 11px; }
.address h3, .library h3 { font-family: "Open Sans", sans-serif; }
.form { padding: 3px 4px 0 0; }
.frow { display: flex; height: 16px; }
.frow label { width: 84px; margin-right: 13px; text-align: right; line-height: 12px; }
.frow .pick { width: 93px; background: #e1e1e1; border: 1px solid #bdbdbd; border-bottom: 0; }
.frow input { width: 93px; height: 14px; border: 1px solid #777; background: #fff; padding: 0 3px; }
.mem { flex: none; height: 333px; margin-top: 7px; display: flex; overflow: hidden; }
table { display: flex; flex-direction: column; width: 137px; height: 340px; }
thead { height: 12px; }
tbody { height: 328px; display: grid; grid-template-rows: repeat(29, 1fr); }
tr { display: grid; grid-template-columns: 23px repeat(10, 1fr); align-items: center; }
th { padding: 0; font-size: 10px; line-height: 11px; font-weight: 400; text-align: center; }
tbody th { font-size: 9px; }
td { padding: 0; display: flex; justify-content: center; }
td i { width: 8px; height: 8px; background: #63f563; border: 1px solid #3a9a3a; }
td.cur i { border-color: #000; outline: 1px solid #1c5f1c; }
.vbar { width: 13px; display: flex; flex-direction: column; align-items: center; justify-content: space-between; background: #f0f0f0; color: #444; padding: 3px 0; }
.vbar b { width: 100%; background: #cdcdcd; }
.mem .vbar { margin-left: auto; margin-right: 1px; }
.mem .vbar b { height: 13px; margin-bottom: auto; margin-top: 2px; }
.locs { display: grid; grid-template-columns: 97px 1fr; height: 16px; line-height: 17px; }
.locs span { padding-left: 3px; border-right: 1px solid #eee; }

.editor { flex: 1; min-width: 0; margin: 0 4px; display: flex; flex-direction: column; padding-bottom: 3px; }
.tabs { flex: none; height: 17px; display: flex; align-items: center; padding: 0 7px 0 4px; }
.tab { position: relative; width: 130px; height: 17px; display: flex; align-items: center; gap: 7px; padding-left: 22px; color: #111; }
.tabbg { position: absolute; inset: 0; width: 100%; height: 100%; }
.tab button { position: relative; }
.tname { font-weight: 700; font-size: 10px; white-space: nowrap; }
.last { margin-left: auto; }
.frame { flex: 1; min-height: 0; display: grid; grid-template: 13px 1fr 14px / 13px 1fr 14px; border: 4px solid #b5d2e8; border-top-width: 3px; outline: 1px solid #9fb9d4; outline-offset: -1px; background: #f0f0f0; }
.hr { grid-area: 1 / 2 / 2 / 4; width: 100%; overflow: hidden; }
.vr { grid-area: 2 / 1 / 4 / 2; height: 100%; min-height: 0; overflow: hidden; }
.frame text { font: 7px "Liberation Sans", sans-serif; fill: #444; }
.canvas { grid-area: 2 / 2; background: #c0c0c0; overflow: hidden; padding: 109px 0 0 192px; min-width: 0; min-height: 0; }
.screen { width: 533px; height: 318px; display: flex; padding: 0 0 12px 10px; background: linear-gradient(to right, #bbbbbb 10px, #b0b0b0 10px); box-shadow: 2px 2px 3px #777; }
.mosaic { display: grid; grid-template-columns: repeat(15, 34px); grid-auto-rows: 34px; }
.edge { flex: 1; background: #979797; }
.main { grid-area: 2 / 3; width: 14px; }
.main b { height: 319px; margin-bottom: 22px; }
.hbar { grid-area: 3 / 2; display: flex; align-items: center; justify-content: space-between; padding: 0 3px; color: #333; }
.hbar b { width: 727px; height: 13px; background: #cdcdcd; margin-right: 15px; }

.library { width: 147px; flex: none; display: flex; flex-direction: column; }
.library .phead { padding-left: 5px; }
.lbody { flex: 1; min-height: 0; background: #f0f0f0; border: 1px solid #b4bdd2; border-top: 0; display: flex; flex-direction: column; padding: 6px 6px 10px 4px; }
.lpick { display: flex; gap: 7px; height: 17px; }
.lpick .pick { width: 110px; background: #e3e3e3; border: 1px solid #bdbdbd; }
.lpick button { width: 17px; background: #e3e3e3; border: 1px solid #bdbdbd; }
.lbox { flex: none; height: 14px; margin-top: 7px; border: 1px solid #d8d8d8; border-bottom: 0; }
.pics { display: flex; flex-direction: column; gap: 34px; margin-top: 5px; flex: 1; }
.pic { padding-left: 20px; display: flex; }
.pic > div { display: grid; grid-template-columns: 34px 34px; grid-auto-rows: 34px; }
.pic.chosen { background: linear-gradient(to right, #ffff00 20px, transparent 20px); }
.lzoom { appearance: none; height: 6px; width: 122px; align-self: flex-end; margin-right: 5px; background: linear-gradient(#d4d4d4, #d4d4d4) center / 100% 1px no-repeat; }
.lzoom::-webkit-slider-thumb { appearance: none; width: 6px; height: 6px; background: #0b78d0; }
.ltabs { display: flex; height: 16px; margin-bottom: 4px; padding-left: 6px; font-size: 9px; color: #8a8a8a; }
.ltabs button { width: 46px; white-space: nowrap; background: #f0f0f0; flex: none; }
.ltabs .on { background: #fff; color: #222; }

.status { flex: none; height: 20px; background: #f0f0f0; display: flex; padding: 2px 0; color: #333; white-space: nowrap; }
.status > span { border-right: 1px solid #b5b5b5; height: 16px; line-height: 15px; padding-left: 4px; overflow: hidden; flex: none; }
.status .s1 { width: 139px; padding: 0 4px 0 1px; }
.s2 { width: 76px; } .s3 { width: 142px; } .s4 { width: 128px; } .s5 { width: 65px; }
.status .s6 { width: 50px; padding-left: 5px; } .s7 { width: 49px; } .s8 { width: 99px; }
.k { color: #aaa; } .k1 { width: 27px; } .k2 { width: 31px; } .k3 { width: 31px; }
.zoom { margin-left: auto; display: flex; align-items: center; height: 16px; }
.zoom em { font-style: normal; color: #999; width: 8px; text-align: center; }
.ztrack { width: 72px; }
.zt { display: flex; justify-content: space-between; padding: 0 4px; height: 3px; }
.zt i { width: 1px; background: #555; }
#zoom { appearance: none; display: block; width: 100%; height: 12px; background: linear-gradient(#ddd, #ddd) center / 100% 2px no-repeat; }
#zoom::-webkit-slider-thumb { appearance: none; width: 8px; height: 12px; background: #0b78d0; clip-path: polygon(50% 0, 100% 30%, 100% 100%, 0 100%, 0 30%); }

.taskbar { flex: none; height: 33px; background: linear-gradient(to right, #22353c, #28343a 60%, #1b262b); color: #eee; display: flex; }
.start { width: 40px; }
.find { width: 240px; flex: none; background: #f1f1f1; display: flex; align-items: center; padding: 2px 3px 2px 10px; gap: 7px; color: #444; }
.find input { flex: 1; border: 0; background: none; font-size: 12px; padding: 0 2px; }
.find input::placeholder { color: #444; opacity: 1; }
.case { width: 60px; height: 27px; border-radius: 5px; background: #e2e2e2; display: flex; align-items: center; justify-content: center; }
.apps { width: 662px; flex: none; display: flex; }
.apps button { flex: 1; position: relative; }
.apps .run::after { content: ""; position: absolute; left: 4px; right: 4px; bottom: 0; height: 2px; background: #82b8e6; }
.apps .cur { background: #48555c; }
.apps b, .note b { position: absolute; left: 24px; top: 15px; width: 16px; height: 16px; border-radius: 8px; border: 1px solid #8a969c; background: #2a383e; color: #fff; font-size: 9px; line-height: 14px; font-weight: 600; }
.tray { flex: 1; display: flex; align-items: center; justify-content: flex-end; gap: 6px; white-space: nowrap; padding-right: 8px; }
.temp { font-size: 12px; margin: 0 13px 0 2px; }
.eng { margin: 0 4px 0 1px; }
.clock { display: flex; flex-direction: column; align-items: center; line-height: 15px; width: 52px; }
.note { position: relative; width: 32px; height: 33px; padding-right: 2px; }
.note b { left: 16px; top: 14px; }
</style>
